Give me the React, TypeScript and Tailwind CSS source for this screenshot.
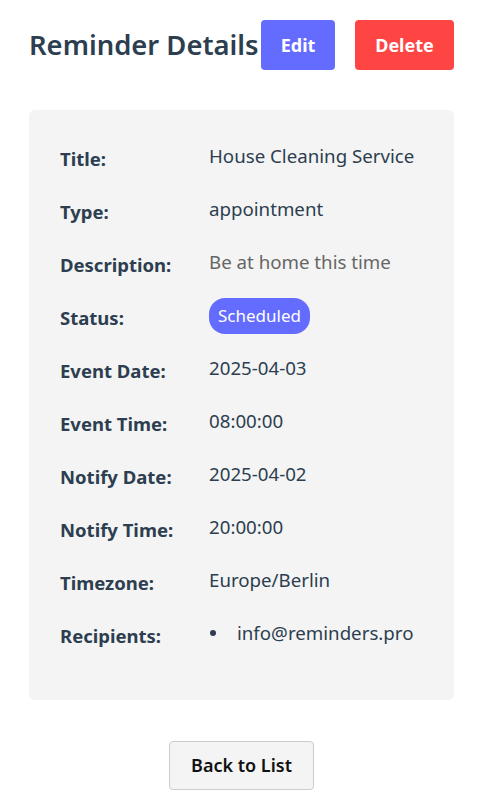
const rows: { label: string; value: string; kind?: "muted" | "badge" | "list" }[] = [
  { label: "Title:", value: "House Cleaning Service" },
  { label: "Type:", value: "appointment" },
  { label: "Description:", value: "Be at home this time", kind: "muted" },
  { label: "Status:", value: "Scheduled", kind: "badge" },
  { label: "Event Date:", value: "2025-04-03" },
  { label: "Event Time:", value: "08:00:00" },
  { label: "Notify Date:", value: "2025-04-02" },
  { label: "Notify Time:", value: "20:00:00" },
  { label: "Timezone:", value: "Europe/Berlin" },
  { label: "Recipients:", value: "info@reminders.pro", kind: "list" },
];

export default function App() {
  return (
    <div
      className="min-h-screen bg-white px-[29px] pt-5 text-[#2c3e50]"
      style={{ fontFamily: '"Noto Sans", "Open Sans", sans-serif' }}
    >
      <div className="flex w-[425px] items-center justify-between">
        <h1 className="whitespace-nowrap text-[27.4px] font-semibold leading-none">Reminder Details</h1>
        <div className="flex shrink-0 gap-5">
          <button className="h-[50px] w-[74px] rounded bg-[#646cff] text-[18px] font-bold text-white">
            Edit
          </button>
          <button className="h-[50px] w-[99px] rounded bg-[#ff4444] text-[18px] font-bold text-white">
            Delete
          </button>
        </div>
      </div>

      <div className="mt-10 w-[425px] rounded-md bg-[#f4f4f4] px-[31px] pb-10 pt-5">
        {rows.map((row) => (
          <div key={row.label} className="flex h-[53px] items-center">
            <div className="w-[149px] shrink-0 pt-1 text-[18.5px] font-bold">{row.label}</div>
            {row.kind === "badge" ? (
              <span className="rounded-2xl bg-[#646cff] px-[9px] py-[5px] text-[17px] leading-[26px] text-white">
                {row.value}
              </span>
            ) : row.kind === "list" ? (
              <ul className="text-[18.7px]">
                <li className="flex items-center">
                  <span className="ml-[1px] mr-[21px] h-[6px] w-[6px] rounded-full bg-[#2c3e50]" />
                  {row.value}
                </li>
              </ul>
            ) : (
              <div className={`text-[18.7px] ${row.kind === "muted" ? "text-[#666]" : ""}`}>{row.value}</div>
            )}
          </div>
        ))}
      </div>

      <div className="mt-[41px] flex w-[425px] justify-center">
        <button className="h-[49px] w-[145px] rounded border border-[#ccc] bg-[#f4f4f4] text-[18px] font-semibold text-[#111]">
          Back to List
        </button>
      </div>
    </div>
  );
}
